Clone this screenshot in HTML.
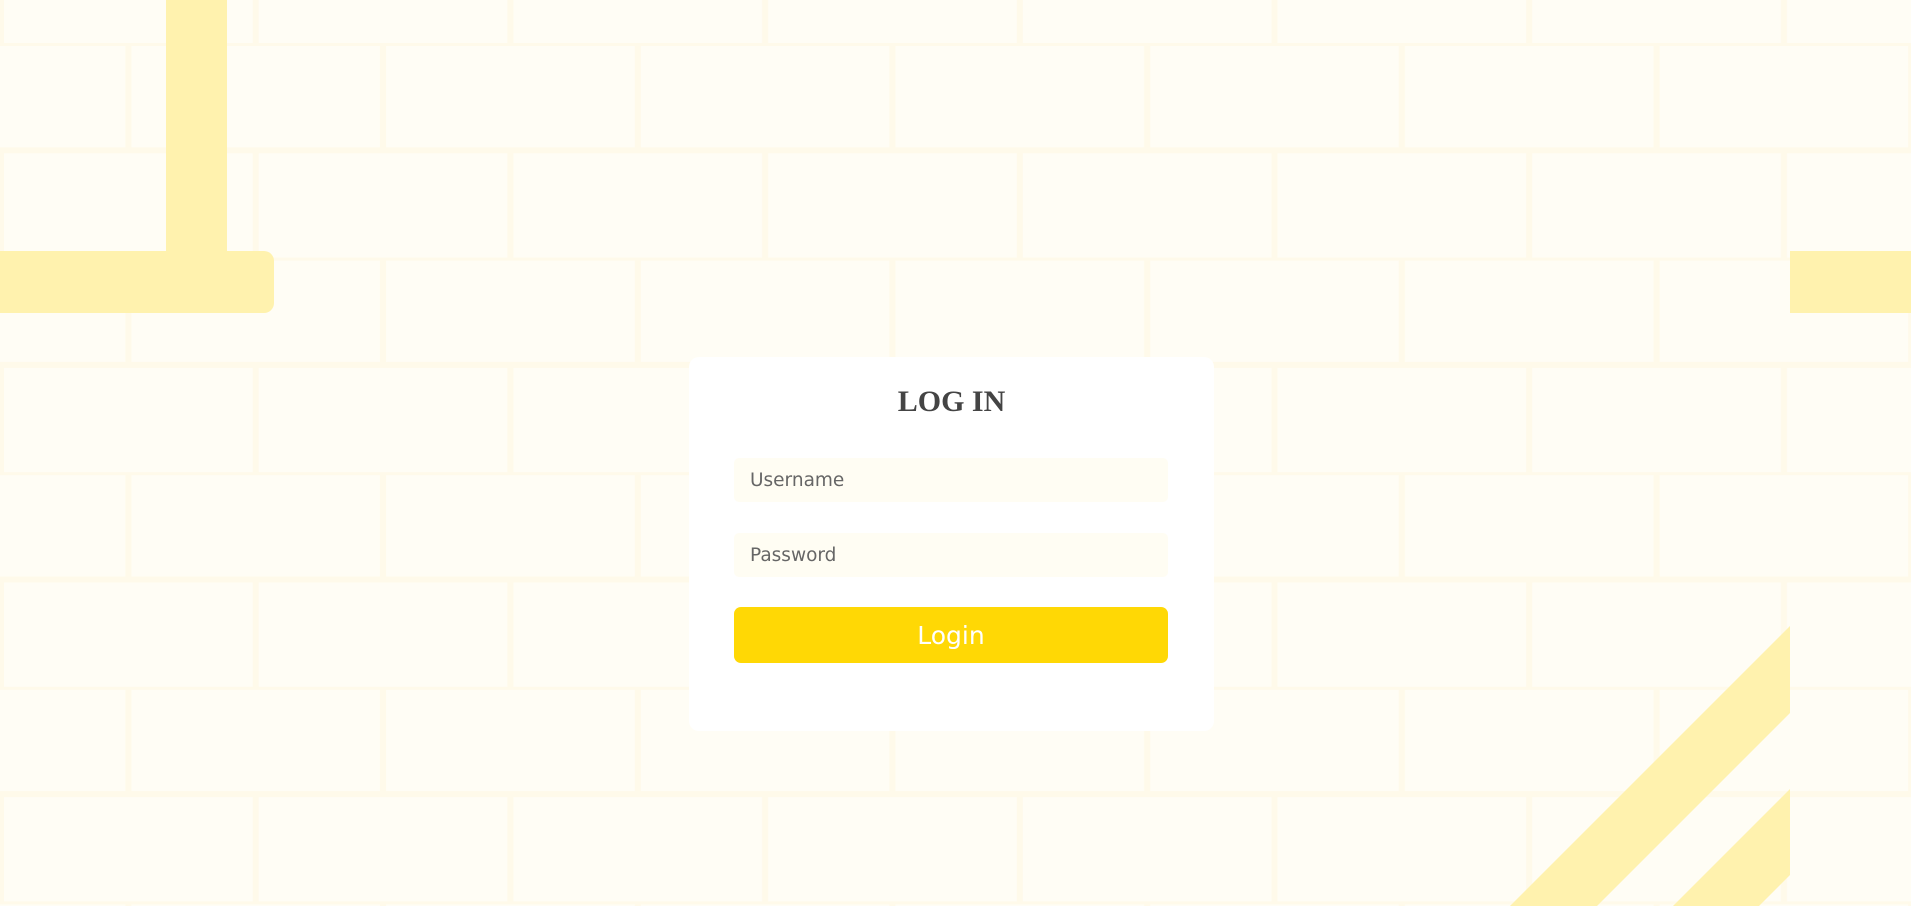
<!DOCTYPE html>
<html><head><meta charset="utf-8"><style>
html,body{margin:0;padding:0;width:1911px;height:906px;overflow:hidden;background:#fffdf5;font-family:"Liberation Sans",sans-serif}
svg.bg{position:absolute;left:0;top:0}
.card{position:absolute;left:689px;top:357px;width:525px;height:374px;background:#fff;border-radius:10px}
h1{position:absolute;left:0;right:0;top:28px;margin:0;text-align:center;font-family:"Liberation Serif",serif;font-weight:bold;font-size:30px;color:#444}
.inp{position:absolute;left:45px;width:434px;height:44px;background:#fffdf3;border-radius:5px;color:#666;line-height:46px;box-sizing:border-box;padding-left:16px;font-family:"DejaVu Sans","Liberation Sans",sans-serif;font-size:18.5px}
.btn{position:absolute;left:45px;top:250px;width:434px;height:56px;background:#ffd805;border-radius:7px;color:#fff;text-align:center;line-height:58px;font-size:25px;font-family:"DejaVu Sans","Liberation Sans",sans-serif}
</style></head><body>
<svg class="bg" width="1911" height="906" xmlns="http://www.w3.org/2000/svg">
<defs>
<pattern id="b" width="509.4" height="214.6" patternUnits="userSpaceOnUse" patternTransform="translate(1,43)">
<g stroke="#fffaea" stroke-width="6" fill="none">
<line x1="0" y1="0" x2="509.4" y2="0"/>
<line x1="0" y1="107.3" x2="509.4" y2="107.3"/>
<line x1="127.4" y1="0" x2="127.4" y2="107.3"/>
<line x1="382" y1="0" x2="382" y2="107.3"/>
<line x1="0" y1="107.3" x2="0" y2="214.6"/>
<line x1="254.7" y1="107.3" x2="254.7" y2="214.6"/>
<line x1="509.4" y1="107.3" x2="509.4" y2="214.6"/>
</g>
</pattern>
</defs>
<rect width="1911" height="906" fill="#fffdf5"/>
<rect width="1911" height="906" fill="url(#b)"/>
<g fill="#fff2ae">
<rect x="166" y="0" width="61" height="260"/>
<rect x="-20" y="251" width="294" height="62" rx="10"/>
<rect x="1790" y="251" width="121" height="62"/>
<polygon points="1790,626 1790,713 1597,906 1510,906"/>
<polygon points="1790,789 1790,875 1759,906 1673,906"/>
</g>
</svg>
<div class="card">
<h1>LOG IN</h1>
<div class="inp" style="top:101px">Username</div>
<div class="inp" style="top:176px">Password</div>
<div class="btn">Login</div>
</div>
</body></html>
